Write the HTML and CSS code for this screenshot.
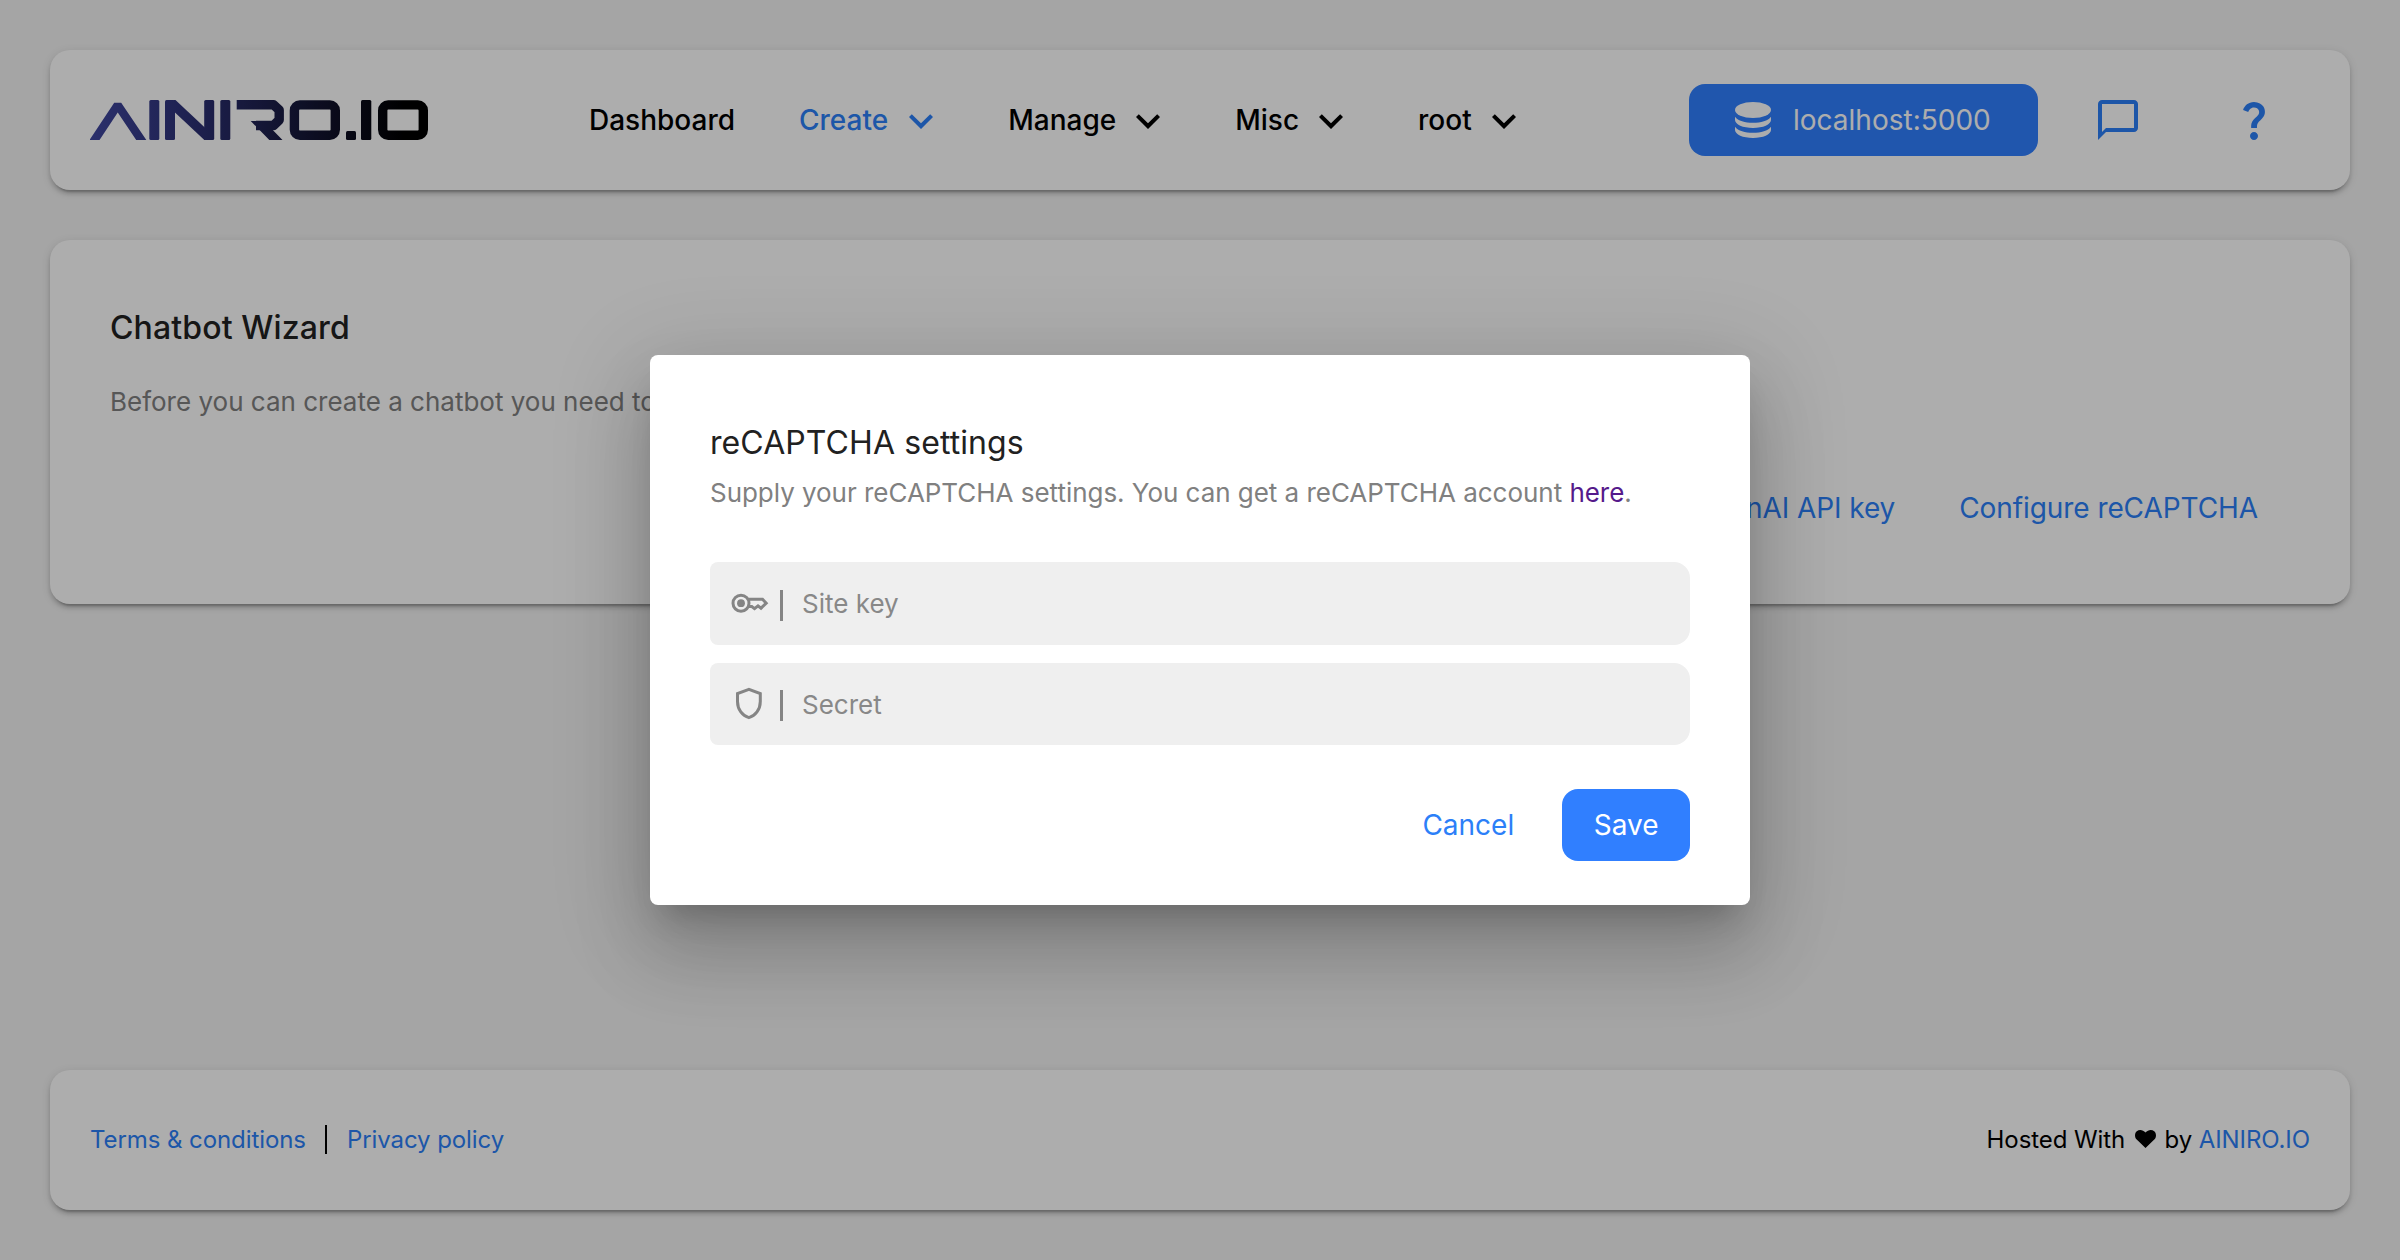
FILE: index.html
```html
<!DOCTYPE html>
<html lang="en">
<head>
<meta charset="utf-8">
<title>Chatbot Wizard - AINIRO.IO</title>
<link rel="stylesheet" href="styles.css">
</head>
<body>
<svg class="defs" width="0" height="0" aria-hidden="true">
  <symbol id="chevron" viewBox="0 0 24 24"><path d="M7.41 8.59 12 13.17l4.59-4.58L18 10l-6 6-6-6z"/></symbol>
</svg>
<div class="page">
  <header class="card navbar">
    <svg class="logo" viewBox="0 0 338 40" role="img" aria-label="AINIRO.IO">
      <defs>
        <linearGradient id="brand" gradientUnits="userSpaceOnUse" x1="0" y1="0" x2="315" y2="0">
          <stop offset="0" stop-color="#40479f"/><stop offset=".35" stop-color="#2b2f72"/><stop offset="1" stop-color="#000"/>
        </linearGradient>
      </defs>
      <g fill="none" stroke="url(#brand)" stroke-width="9.4">
        <polyline points="2.500,43 27.700,5 53.300,43" stroke-width="8.400" stroke-linejoin="bevel"/>
        <line x1="81.500" y1="2.700" x2="118" y2="37"/>
        <polyline points="146.700,4.700 183.500,4.700 189.200,10 189.200,20 183.500,25.500 166,25.500" stroke-linejoin="round"/>
        <rect x="204.400" y="4.900" width="40.900" height="30.300" rx="5.500"/>
        <rect x="292.700" y="4.900" width="40.600" height="30.300" rx="5.500"/>
      </g>
      <g fill="url(#brand)">
        <rect x="59.300" y="0" width="10" height="40" rx="1.500"/>
        <rect x="75" y="0" width="10" height="40" rx="1.500"/>
        <rect x="114.200" y="0" width="10" height="40" rx="1.500"/>
        <rect x="130.300" y="0" width="10" height="40" rx="1.500"/>
        <polygon points="160.700,21 184,21 182.500,29.700 192.500,40 179.300,40"/>
        <rect x="256" y="31" width="10" height="9" rx="1.500"/>
        <rect x="271" y="0" width="10.300" height="40" rx="1.500"/>
      </g>
    </svg>
    <nav class="menu">
      <a class="menu-item first">Dashboard</a>
      <a class="menu-item active">Create<svg class="icon"><use href="#chevron"/></svg></a>
      <a class="menu-item">Manage<svg class="icon"><use href="#chevron"/></svg></a>
      <a class="menu-item">Misc<svg class="icon"><use href="#chevron"/></svg></a>
      <a class="menu-item">root<svg class="icon"><use href="#chevron"/></svg></a>
    </nav>
    <button class="btn btn-primary server">
      <svg class="db" viewBox="0 0 36 36"><ellipse cx="18" cy="8" rx="18" ry="8"/><path d="M0 14.8c3 4 10 6 18 6s15-2 18-6V18c0 4.400-8 8-18 8S0 22.400 0 18z"/><path d="M0 24.800c3 4 10 6 18 6s15-2 18-6V28c0 4.400-8 8-18 8S0 32.400 0 28z"/></svg>
      localhost:5000
    </button>
    <div class="tools">
      <svg class="icon" viewBox="0 0 24 24"><path d="M20 2H4c-1.100 0-2 .9-2 2v18l4-4h14c1.100 0 2-.9 2-2V4c0-1.100-.9-2-2-2zm0 14H6l-2 2V4h16v12z"/></svg>
      <svg class="icon" viewBox="0 0 24 24"><path d="M11.070 12.850c.77-1.390 2.250-2.210 3.110-3.440.91-1.290.4-3.700-2.180-3.700-1.690 0-2.520 1.280-2.870 2.340L6.540 6.960C7.250 4.830 9.180 3 11.990 3c2.350 0 3.960 1.070 4.780 2.410.7 1.150 1.110 3.300.03 4.900-1.200 1.770-2.350 2.310-2.970 3.450-.25.46-.35.76-.35 2.240h-2.890c-.01-.78-.13-2.050.48-3.150zM14 20c0 1.100-.9 2-2 2s-2-.9-2-2 .9-2 2-2 2 .9 2 2z"/></svg>
    </div>
  </header>
  <main class="card wizard">
    <h1>Chatbot Wizard</h1>
    <p>Before you can create a chatbot you need to</p>
    <div class="wizard-actions"><a>Configure OpenAI API key</a><a>Configure reCAPTCHA</a></div>
  </main>
  <footer class="card footer">
    <div class="legal"><a>Terms &amp; conditions</a><span class="divider"></span><a>Privacy policy</a></div>
    <div class="hosted">Hosted With <svg class="heart" viewBox="0 0 21 18"><path d="M10.500 18 1.700 9.600C-.6 7.200-.5 3.300 1.800 1.300 4.300-.8 8-.3 10.500 2.600 13-.3 16.700-.8 19.200 1.300c2.300 2 2.400 5.900.1 8.300z"/></svg> by <a>AINIRO.IO</a></div>
  </footer>
</div>
<div class="backdrop">
  <section class="dialog" role="dialog">
    <h2>reCAPTCHA settings</h2>
    <p>Supply your reCAPTCHA settings. You can get a reCAPTCHA account <a class="visited">here</a>.</p>
    <div class="fields">
      <div class="field">
        <svg class="field-icon" viewBox="0 0 40 40"><circle cx="12" cy="19.200" r="8"/><circle class="dot" cx="12" cy="19.200" r="3.900"/><path d="M19.200 15.200H33.500L37.200 19.200 32 24.200 29 21.800 25.500 24.600 22.800 22.600H19.200"/></svg>
        <span class="bar"></span><span>Site key</span>
      </div>
      <div class="field">
        <svg class="field-icon" viewBox="0 0 40 40"><path d="M19.900 5.300 8.500 9.500V17.500C8.500 25.500 13.500 32 19.900 33.600 26.300 32 31.300 25.500 31.300 17.500V9.500Z"/></svg>
        <span class="bar"></span><span>Secret</span>
      </div>
    </div>
    <div class="dialog-actions"><button class="btn btn-text">Cancel</button><button class="btn btn-primary">Save</button></div>
  </section>
</div>
</body>
</html>
```
FILE: styles.css
```css
* { box-sizing: border-box; }
body { margin: 0; font-family: Inter, "Liberation Sans", sans-serif; color: #000; background: #f3f3f3; }
h1, h2, p { margin: 0; }
a { color: #2c7ff8; }
svg { fill: currentColor; flex: none; }
.defs { position: absolute; }
.page { height: 1260px; padding: 50px; display: flex; flex-direction: column; gap: 50px; }
.card { background: #fff; border-radius: 20px; box-shadow: 0 6px 2px -4px rgba(0,0,0,.2), 0 4px 4px rgba(0,0,0,.14), 0 2px 10px rgba(0,0,0,.12); }
.icon { width: 48px; height: 48px; }

.navbar { height: 140px; padding: 0 72px 0 40px; display: flex; align-items: center; }
.logo { width: 338px; height: 40px; }
.menu { display: flex; margin-left: 161px; gap: 75px; }
.menu-item { display: flex; align-items: center; height: 48px; font-size: 28px; font-weight: 500; color: #000; }
.menu-item.first { margin-right: -11px; }
.menu-item .icon { margin: 2px -12px 0 8px; }
.menu-item.active { color: #2c7ff8; }
.menu-item.active .icon { margin-left: 9px; }
.btn { height: 72px; border: 0; border-radius: 16px; font: 400 28px Inter, "Liberation Sans", sans-serif; display: flex; align-items: center; }
.btn-primary { background: #307fff; color: #fff; padding: 0 31.5px; }
.server { margin-left: auto; width: 349px; padding: 0 0 0 46px; gap: 22px; }
.db { width: 36px; height: 36px; }
.tools { display: flex; gap: 88px; margin-left: 56px; color: #2c7ff8; }

.wizard { height: 364px; padding: 68px 92px 0 60px; }
.wizard h1 { font-size: 32px; line-height: 40px; font-weight: 500; letter-spacing: .12px; color: #212121; }
.wizard p { margin-top: 38px; font-size: 26px; line-height: 32px; color: #808080; }
.wizard-actions { display: flex; justify-content: flex-end; gap: 64px; margin-top: 72px; font-size: 28px; line-height: 36px; letter-spacing: -.08px; }

.footer { height: 140px; margin-top: auto; padding: 0 40px 2px; display: flex; align-items: center; justify-content: space-between; font-size: 24px; letter-spacing: -.08px; }
.legal { display: flex; align-items: center; }
.divider { width: 2px; height: 29px; margin: 0 20px 0 19px; background: #000; }
.heart { width: 21px; height: 18px; margin: 0 2px 0 3px; }

.backdrop { position: absolute; inset: 0; background: rgba(0,0,0,.32); display: flex; align-items: center; justify-content: center; }
.dialog { width: 1100px; height: 550px; padding: 68px 60px 0; background: #fff; border-radius: 8px; box-shadow: 0 22px 30px -14px rgba(0,0,0,.2), 0 48px 76px 6px rgba(0,0,0,.14), 0 18px 92px 16px rgba(0,0,0,.12); }
.dialog h2 { font-size: 32px; line-height: 40px; font-weight: 400; letter-spacing: .08px; color: #212121; }
.dialog p { margin: 14px 0 53px; font-size: 26px; line-height: 32px; letter-spacing: -.035px; color: #808080; }
.visited { color: #551a8b; }
.fields { display: grid; gap: 18px; }
.field { height: 83px; padding-left: 19px; border-radius: 8px 16px 16px 8px; background: #efefef; color: #888; font-size: 26px; display: flex; align-items: center; }
.field + .field { height: 82px; }
.field-icon { width: 40px; height: 40px; fill: none; stroke: #858585; stroke-width: 3; }
.field-icon .dot { fill: #858585; stroke: none; }
.bar { width: 3px; height: 31px; margin: 3px 19px 0 11px; background: #858585; }
.dialog-actions { display: flex; justify-content: flex-end; margin-top: 44px; gap: 16px; }
.btn-text { background: none; color: #2c7ff8; padding: 0 32px; }
```
